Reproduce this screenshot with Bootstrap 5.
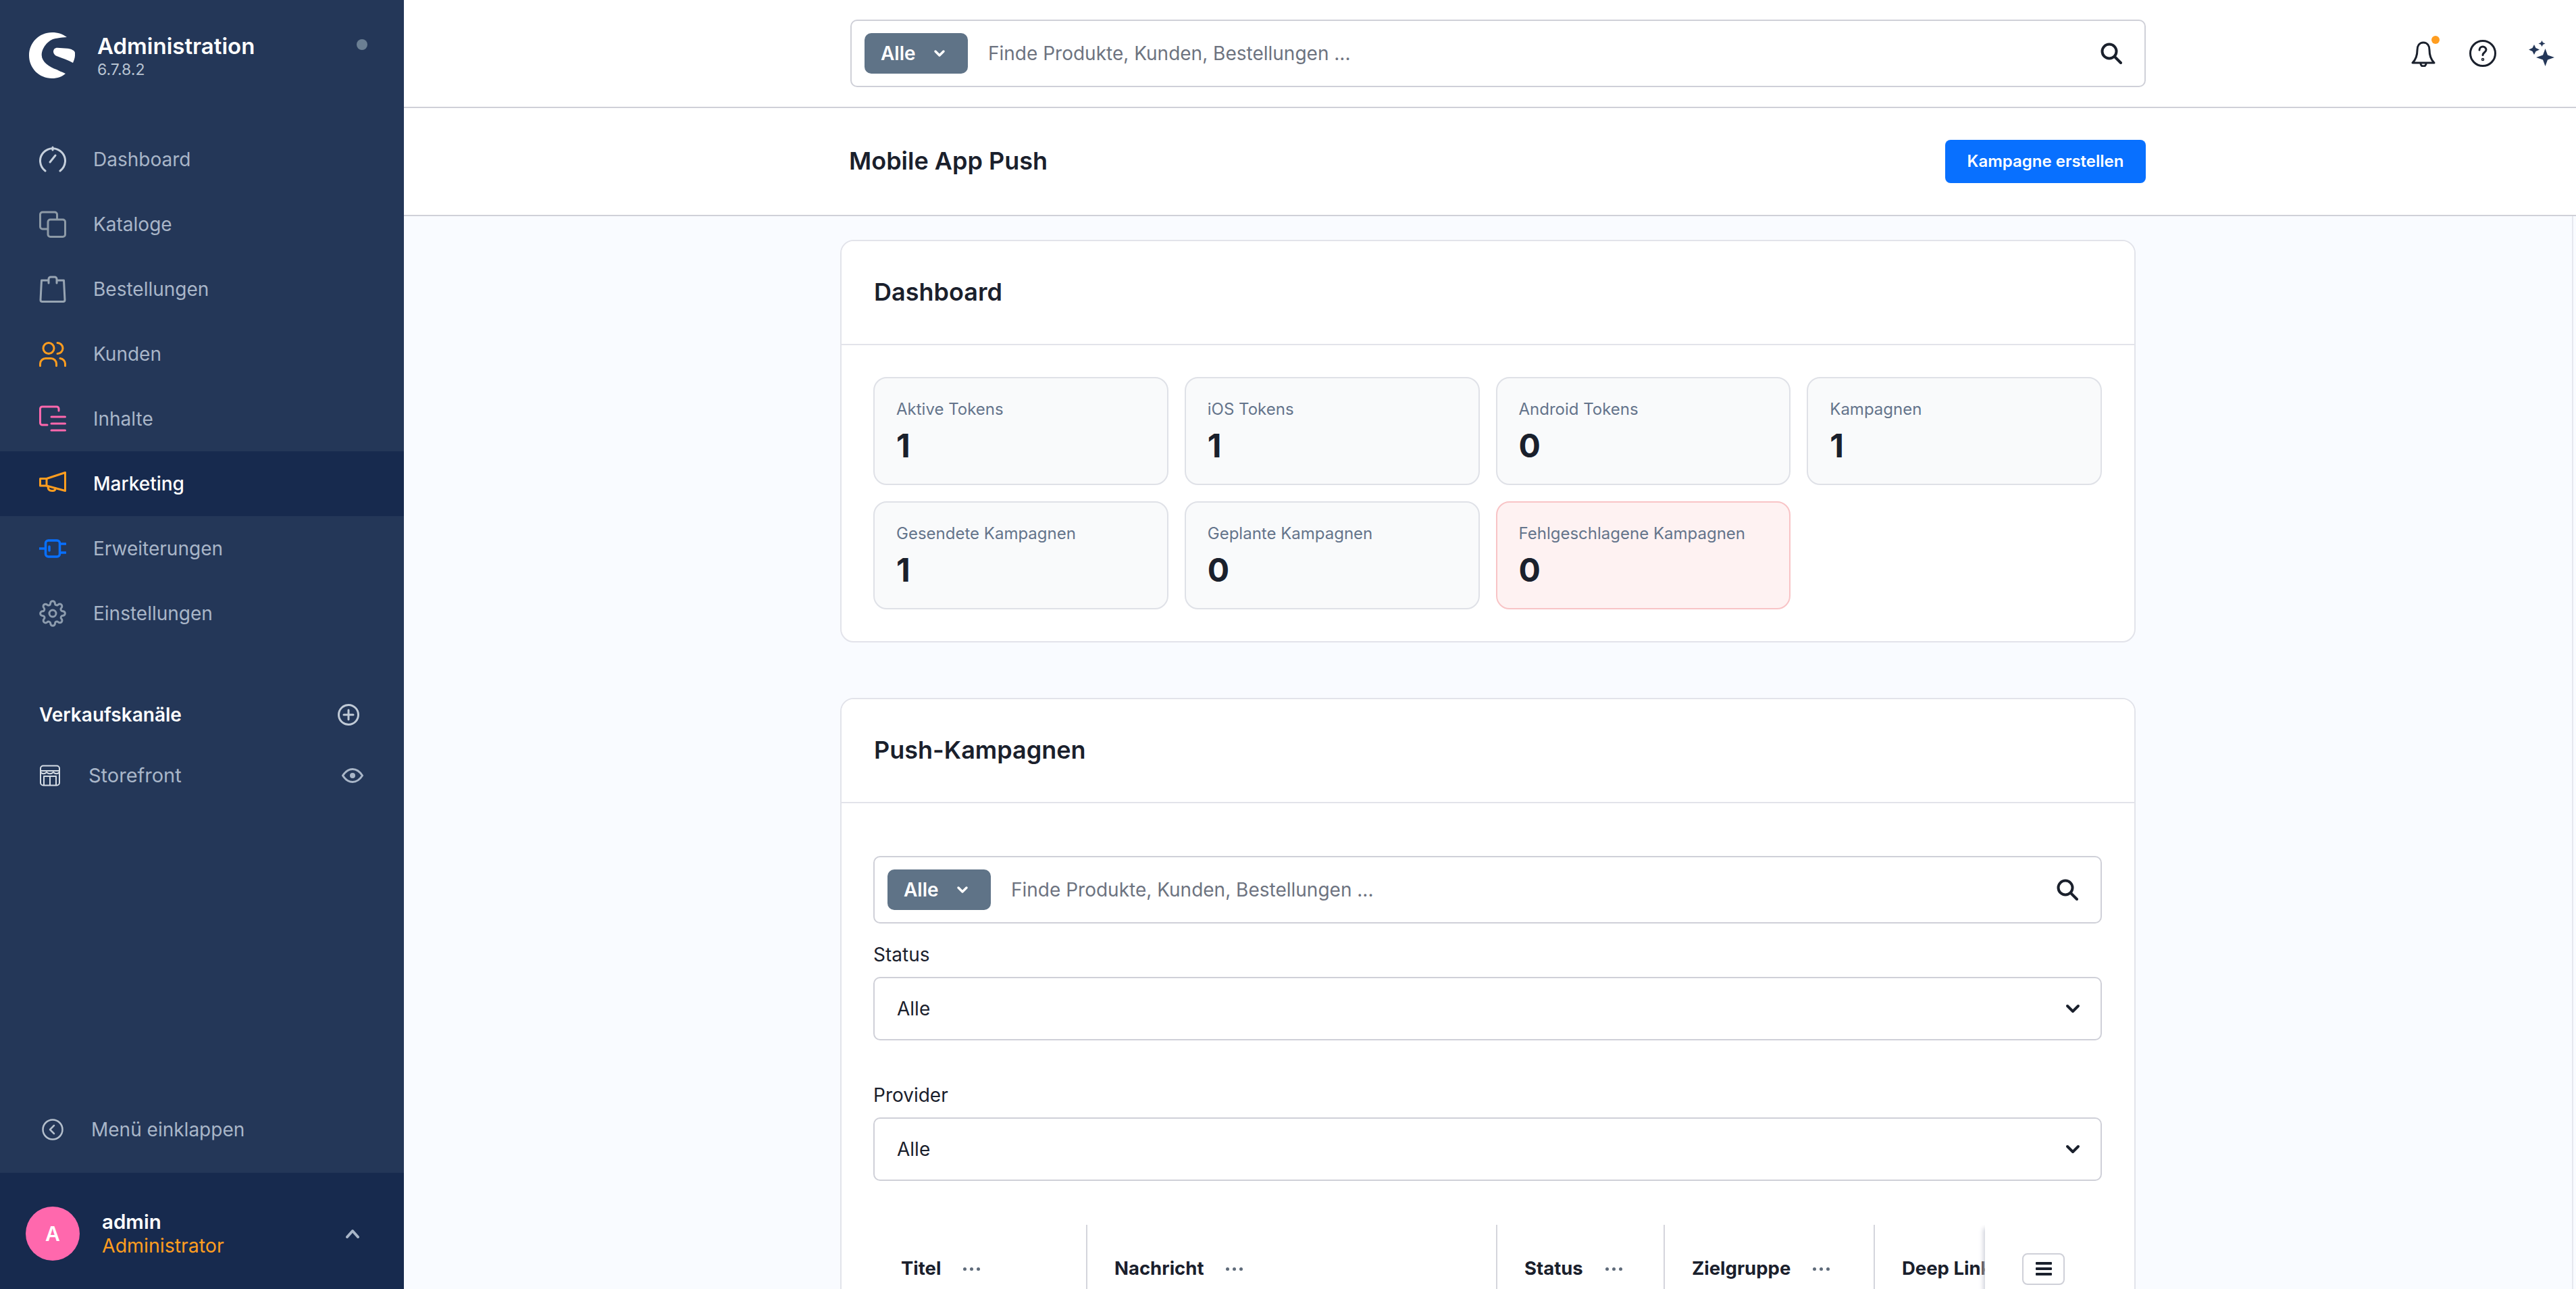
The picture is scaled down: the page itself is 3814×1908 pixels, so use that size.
<!DOCTYPE html>
<html lang="de">
<head>
  <meta charset="UTF-8" />
  <meta name="viewport" content="width=device-width, initial-scale=1.0"/>
  <title>Mobile App Push</title>
  <link href="https://cdn.jsdelivr.net/npm/bootstrap@5.3.2/dist/css/bootstrap.min.css" rel="stylesheet" />
  <style>
    html, body { height: 100%; }
    body {
      font-family: "Inter", "Liberation Sans", sans-serif;
      font-size: 28px;
      color: #1a202c;
      background: #f9fbff;
      overflow: hidden;
    }
    svg { display: block; flex: none; }
    .app-shell { height: 1908px; }

    /* sidebar */
    .side-bar { width: 598px; flex: none; background: #243758; }
    .side-head { height: 188px; padding: 48px 0 0 43px; flex: none; }
    .side-head .brand-text { margin-left: 33px; }
    .brand-name { font-size: 33px; font-weight: 600; color: #fff; line-height: 36px; margin-top: 2px; }
    .brand-ver { font-size: 23px; color: #b9c4d2; line-height: 28px; margin-top: 3px; }
    .brand-dot { width: 16px; height: 16px; border-radius: 50%; background: #6b7f93; margin: 10px 54px 0 auto; }
    .side-nav .nav-link {
      height: 96px; padding: 0 0 0 58px; display: flex; align-items: center;
      color: #a9b6c8; font-size: 28px;
    }
    .side-nav .nav-link span { margin-left: 40px; }
    .side-nav .nav-link.is-current { background: #172a4e; color: #fff; font-weight: 500; }
    .icon-lift { margin-top: -6px; }
    .channel-head { padding: 0 66px 0 58px; margin-top: 82px; height: 40px; flex: none; }
    .channel-title { font-size: 28px; font-weight: 600; color: #fff; }
    .channel-row { padding: 0 60px 0 58px; margin-top: 50px; height: 40px; color: #a9b6c8; font-size: 29px; flex: none; }
    .channel-row span { margin-left: 41px; }
    .collapse-row { padding: 0 0 0 62px; color: #a9b6c8; height: 32px; margin-bottom: 48px; flex: none; }
    .collapse-row span { margin-left: 41px; }
    .user-box { background: #172a4e; height: 172px; padding: 8px 66px 0 38px; flex: none; }
    .user-avatar { width: 80px; height: 80px; border-radius: 50%; background: #ff68ad; color: #fff; font-weight: 600; font-size: 30px; flex: none; }
    .user-text { margin-left: 33px; }
    .user-name { font-size: 29.5px; font-weight: 600; color: #fff; line-height: 36px; }
    .user-role { font-size: 28.5px; color: #ff9d1f; line-height: 36px; }

    /* top bars */
    .top-bar, .page-bar { height: 160px; flex: none; background: #fff; border-bottom: 2px solid #cfd0d8; padding-left: 661px; }
    .top-wrap { width: 1918px; flex: none; }
    .top-icons { margin-left: auto; padding-right: 32px; gap: 48px; }
    .bell-wrap { position: relative; margin-right: 2px; }
    .bell-dot { position: absolute; top: -6px; right: -6px; width: 12px; height: 12px; border-radius: 50%; background: #ff9d1f; }
    .page-title { font-size: 36px; font-weight: 600; margin: 0 0 0 -2px; }
    .btn-create {
      background: #0870ff; border: 0; color: #fff; height: 64px; width: 297px; font-size: 24px; font-weight: 600;
      border-radius: 8px; padding: 0;
    }

    /* search */
    .search-box { height: 100px; border: 2px solid #cfd0d8; border-radius: 10px; background: #fff; padding: 0 33px 0 19px; }
    .search-scope {
      width: 153px; height: 60px; flex: none; background: #5f7387; color: #fff; border: 0; border-radius: 10px;
      font-size: 28px; font-weight: 600; padding: 0 0 0 24px; gap: 26px;
    }
    .search-input { border: 0; padding: 0 0 0 30px; font-size: 28px; background: transparent; box-shadow: none; }
    .search-input::placeholder { color: #6d7380; opacity: 1; }

    /* content */
    .main-area { flex: 1 1 0; min-height: 0; background: #f9fbff; border-right: 2px solid #e6e8ee; margin-right: 4px; overflow: hidden; padding-top: 35px; }
    .panel { width: 1918px; margin: 0 auto 82px; border: 2px solid #e2e3ea; border-radius: 20px; background: #fff; }
    .panel .card-header { height: 154px; padding: 0 48px; background: #fff; border-bottom: 2px solid #e2e3ea; border-radius: 18px 18px 0 0; }
    .panel .card-title { font-size: 36px; font-weight: 600; margin: 0; }
    .panel .card-body { padding: 47px 48px 47px 47px; }
    .panel .push-body { padding-top: 78px; }
    .stat-row { --bs-gutter-x: 24px; --bs-gutter-y: 24px; }
    .stat-box { height: 160px; padding: 31px 32px; background: #f9fafb; border: 2px solid #dfe1e7; border-radius: 20px; }
    .stat-box.is-failed { background: #fef2f2; border-color: #f8c4c6; }
    .stat-label { font-size: 24px; color: #64748b; line-height: 30px; }
    .stat-value { font-size: 48px; font-weight: 700; line-height: 58px; margin-top: 10px; color: #1a202c; }
    .field-status { margin-top: 28px; }
    .field-provider { margin-top: 63px; }
    .field-label { font-size: 28px; line-height: 36px; margin: 0 0 15px; }
    .field-select {
      height: 94px; border: 2px solid #cfd0d8; border-radius: 10px; padding: 0 33px; font-size: 28px; color: #1a202c;
      background-image: url("data:image/svg+xml,%3csvg xmlns='http://www.w3.org/2000/svg' viewBox='0 0 22 16'%3e%3cpath fill='none' stroke='%231a202c' stroke-width='4' stroke-linecap='round' stroke-linejoin='round' d='M3 4l8 8 8-8'/%3e%3c/svg%3e");
      background-position: right 30px center; background-size: 22px 16px;
    }
    .table-head { height: 130px; margin-top: 65px; position: relative; overflow: hidden; }
    .head-cell { height: 130px; border-left: 2px solid #d4d5dc; padding-left: 40px; gap: 33px; font-size: 27.5px; font-weight: 700; white-space: nowrap; flex: none; }
    .head-cell:first-child { border-left: 0; padding-left: 41px; }
    .head-dots { display: flex; gap: 5px; }
    .head-dots i { width: 5px; height: 5px; border-radius: 50%; background: #5f6b7a; display: block; }
    .head-sticky { position: absolute; right: 0; top: 0; bottom: 0; width: 173px; background: #fff; box-shadow: -7px 0 7px -5px #c9cbd6; }
    .list-btn { width: 63px; height: 47px; border: 2px solid #cfd0d8; border-radius: 8px; background: #fff; padding: 0; margin-left: 55px; }
  </style>
</head>
<body>

<div class="app-shell d-flex">
  <aside class="side-bar d-flex flex-column">
    <div class="side-head d-flex align-items-start">
      <svg width="68" height="68" viewBox="0 0 68 68" fill="#fff">
        <path d="M56 7C50 2.500 43 0 34 0 15 0 0 15 0 34s15 34 34 34c8 0 15-2.500 20-7-6-3-10-4-13-6C30 51 19 44 18.700 33.700 18.700 21 31 9 41 8.700 47 7.500 52 7.500 56 7Z"/>
        <path d="M36 28.500c0-3.500 2-5.800 6-5.800l15 1c5 .3 11 3.300 11 6.300.5 6-1 11-3 15-7-4-15-6.500-24-10-3-1-5-4-5-6.500Z"/>
      </svg>
      <div class="brand-text">
        <div class="brand-name">Administration</div>
        <div class="brand-ver">6.7.8.2</div>
      </div>
      <div class="brand-dot"></div>
    </div>

    <nav class="nav flex-column side-nav">
      <a class="nav-link" href="#">
        <svg width="40" height="40" viewBox="0 0 40 40" fill="none" stroke="#c6d0dc" stroke-width="3" stroke-linecap="round"><path d="M9 37A18.500 18.500 0 1 1 31 37"/><path d="M16 24l8-10"/><path d="M20 2v4"/></svg>
        <span>Dashboard</span>
      </a>
      <a class="nav-link" href="#">
        <svg width="40" height="40" viewBox="0 0 40 40" fill="none" stroke="#8d9aa6" stroke-width="3" stroke-linejoin="round"><path d="M12 27H5a3.500 3.500 0 0 1-3.500-3.500v-18A3.500 3.500 0 0 1 5 2h18a3.500 3.500 0 0 1 3.500 3.500V13"/><rect x="13" y="13" width="25.500" height="25.500" rx="3.500"/></svg>
        <span>Kataloge</span>
      </a>
      <a class="nav-link" href="#">
        <svg width="40" height="40" viewBox="0 0 40 40" fill="none" stroke="#98a5b3" stroke-width="3" stroke-linejoin="round" stroke-linecap="round"><path d="M13 7H3.500L2 36a2.500 2.500 0 0 0 2.500 2.500h31A2.500 2.500 0 0 0 38 36L36.500 7H27"/><path d="M14 11V5a3 3 0 0 1 3-3h6a3 3 0 0 1 3 3v6"/></svg>
        <span>Bestellungen</span>
      </a>
      <a class="nav-link" href="#">
        <svg width="40" height="37" viewBox="0 0 40 37" fill="none" stroke="#ff9d1f" stroke-width="3" stroke-linecap="round"><circle cx="14" cy="9.500" r="8"/><path d="M1.500 35.500v-3a8 8 0 0 1 8-8h8a8 8 0 0 1 8 8v3"/><path d="M27 1.500a8 8 0 0 1 0 16"/><path d="M31 24.500c4.500.5 7.500 4 7.500 8v3"/></svg>
        <span>Kunden</span>
      </a>
      <a class="nav-link" href="#">
        <svg width="40" height="40" viewBox="0 0 40 40" fill="none" stroke="#ff68ad" stroke-width="3" stroke-linecap="round"><path d="M29 8V5a3 3 0 0 0-3-3H4.500a3 3 0 0 0-3 3v21a3 3 0 0 0 3 3H12"/><path d="M18 17h20.500M18 27h20.500M18 37h20.500"/></svg>
        <span>Inhalte</span>
      </a>
      <a class="nav-link is-current" href="#">
        <svg class="icon-lift" width="40" height="30" viewBox="0 0 40 30" fill="none" stroke="#ff9d1f" stroke-width="3" stroke-linejoin="round" stroke-linecap="round"><path d="M11 10.500 38.500 1.500v27L11 21H1.500V10.500Z"/><path d="M11 10.500V21"/><path d="M13 22c0 4 2 6.500 6 6.500h1c3 0 4-2 4-4"/></svg>
        <span>Marketing</span>
      </a>
      <a class="nav-link" href="#">
        <svg width="40" height="40" viewBox="0 0 40 40" fill="none" stroke="#0870ff" stroke-width="3.500" stroke-linecap="round"><rect x="9.500" y="8" width="21" height="24" rx="4"/><path d="M0 20h9M31 13h8M31 26h8"/><path d="M15 17v6"/></svg>
        <span>Erweiterungen</span>
      </a>
      <a class="nav-link" href="#">
        <svg width="40" height="40" viewBox="0 0 24 24" fill="none" stroke="#8d9cae" stroke-width="1.800" stroke-linecap="round" stroke-linejoin="round"><circle cx="12" cy="12" r="3"/><path d="M19.400 15a1.650 1.650 0 0 0 .33 1.820l.06.06a2 2 0 0 1 0 2.830 2 2 0 0 1-2.830 0l-.06-.06a1.650 1.650 0 0 0-1.820-.33 1.650 1.650 0 0 0-1 1.510V21a2 2 0 0 1-2 2 2 2 0 0 1-2-2v-.09A1.650 1.650 0 0 0 9 19.400a1.650 1.650 0 0 0-1.820.33l-.06.06a2 2 0 0 1-2.830 0 2 2 0 0 1 0-2.830l.06-.06a1.650 1.650 0 0 0 .33-1.820 1.650 1.650 0 0 0-1.510-1H3a2 2 0 0 1-2-2 2 2 0 0 1 2-2h.09A1.650 1.650 0 0 0 4.600 9a1.650 1.650 0 0 0-.33-1.820l-.06-.06a2 2 0 0 1 0-2.830 2 2 0 0 1 2.830 0l.06.06a1.650 1.650 0 0 0 1.820.33H9a1.650 1.650 0 0 0 1-1.510V3a2 2 0 0 1 2-2 2 2 0 0 1 2 2v.09a1.650 1.650 0 0 0 1 1.510 1.650 1.650 0 0 0 1.820-.33l.06-.06a2 2 0 0 1 2.830 0 2 2 0 0 1 0 2.830l-.06.06a1.650 1.650 0 0 0-.33 1.820V9a1.650 1.650 0 0 0 1.510 1H21a2 2 0 0 1 2 2 2 2 0 0 1-2 2h-.09a1.650 1.650 0 0 0-1.510 1z"/></svg>
        <span>Einstellungen</span>
      </a>
    </nav>

    <div class="channel-head d-flex align-items-center justify-content-between">
      <div class="channel-title">Verkaufskanäle</div>
      <svg width="32" height="32" viewBox="0 0 32 32" fill="none" stroke="#c0cad6" stroke-width="3" stroke-linecap="round"><circle cx="16" cy="16" r="14.500"/><path d="M16 9v14M9 16h14"/></svg>
    </div>
    <div class="channel-row d-flex align-items-center">
      <svg width="32" height="32" viewBox="0 0 32 32" fill="none" stroke="#d5dce5" stroke-width="2" stroke-linejoin="round"><rect x="2" y="1.500" width="28" height="29" rx="4"/><path d="M2 9h28"/><path d="M2 11c3 3 6 3 9 0 3 3 7 3 10 0 3 3 6 3 9 0"/><path d="M7 30V17h18v13M16 17v13"/></svg>
      <span>Storefront</span>
      <svg class="ms-auto" width="32" height="22" viewBox="0 0 32 22" fill="none" stroke="#a9b6c8" stroke-width="3"><path d="M1.500 11C6 4 11 1.500 16 1.500S26 4 30.500 11C26 18 21 20.500 16 20.500S6 18 1.500 11Z"/><circle cx="16" cy="11" r="2.500" fill="#a9b6c8"/></svg>
    </div>

    <div class="collapse-row d-flex align-items-center mt-auto">
      <svg width="32" height="32" viewBox="0 0 32 32" fill="none" stroke="#b4bfcc" stroke-width="2.500" stroke-linecap="round" stroke-linejoin="round"><circle cx="16" cy="16" r="14.500"/><path d="M18 10l-6 6 6 6"/></svg>
      <span>Menü einklappen</span>
    </div>
    <div class="user-box d-flex align-items-center">
      <div class="user-avatar d-flex align-items-center justify-content-center">A</div>
      <div class="user-text">
        <div class="user-name">admin</div>
        <div class="user-role">Administrator</div>
      </div>
      <svg class="ms-auto" width="20" height="14" viewBox="0 0 20 14" fill="none" stroke="#a9b6c8" stroke-width="4" stroke-linecap="round" stroke-linejoin="round"><path d="M2 12l8-9 8 9"/></svg>
    </div>
  </aside>

  <div class="flex-grow-1 d-flex flex-column">
    <header class="top-bar d-flex align-items-center">
      <div class="top-wrap">
        <div class="search-box d-flex align-items-center">
          <button class="search-scope btn d-flex align-items-center" type="button">
            Alle
            <svg width="18" height="12" viewBox="0 0 18 12" fill="none" stroke="#fff" stroke-width="3.500" stroke-linecap="round" stroke-linejoin="round"><path d="M3 3l6 6 6-6"/></svg>
          </button>
          <input class="form-control search-input" type="text" placeholder="Finde Produkte, Kunden, Bestellungen ..." />
          <svg width="32" height="32" viewBox="0 0 32 32" fill="none" stroke="#1a202c" stroke-width="4" stroke-linecap="round"><circle cx="13" cy="13" r="10.500"/><path d="M21 21l9 9"/></svg>
        </div>
      </div>
      <div class="top-icons d-flex align-items-center">
        <div class="bell-wrap">
          <svg width="36" height="40" viewBox="0 -2 36 40" fill="none" stroke="#1a202c" stroke-width="3" stroke-linejoin="round"><path d="M18 2c-6 0-9 5-9 11 0 9-2 14-7 19h32c-5-5-7-10-7-19 0-6-3-11-9-11Z"/><path d="M14 33a4 4 0 0 0 8 0"/></svg>
          <div class="bell-dot"></div>
        </div>
        <svg width="40" height="40" viewBox="0 0 40 40" fill="none" stroke="#1a202c" stroke-width="3" stroke-linecap="round"><circle cx="20" cy="20" r="18.500"/><path d="M15 15c0-3 2.500-5 5-5s5 2 5 4.500c0 4-5 4-5 8"/><circle cx="20" cy="29" r=".8"/></svg>
        <svg width="38" height="38" viewBox="0 0 38 38" fill="#243758"><path d="M24.500 12 28 21.500 38 25l-10 3.500L24.500 38 21 28.500 11 25l10-3.500Z"/><path d="M8 6l2.500 5L16 13.500 10.500 16 8 21l-2.500-5L0 13.500 5.500 11Z"/><path d="M19.500 0 21 3l3.500 1.500L21 6l-1.500 3L18 6l-3.500-1.500L18 3Z"/></svg>
      </div>
    </header>

    <div class="page-bar d-flex align-items-center">
      <div class="top-wrap d-flex align-items-center justify-content-between">
        <h1 class="page-title">Mobile App Push</h1>
        <button class="btn btn-create" type="button">Kampagne erstellen</button>
      </div>
    </div>

    <main class="main-area">
      <section class="card panel">
        <div class="card-header d-flex align-items-center"><h2 class="card-title">Dashboard</h2></div>
        <div class="card-body">
          <div class="row row-cols-4 stat-row">
            <div class="col"><div class="stat-box"><div class="stat-label">Aktive Tokens</div><div class="stat-value">1</div></div></div>
            <div class="col"><div class="stat-box"><div class="stat-label">iOS Tokens</div><div class="stat-value">1</div></div></div>
            <div class="col"><div class="stat-box"><div class="stat-label">Android Tokens</div><div class="stat-value">0</div></div></div>
            <div class="col"><div class="stat-box"><div class="stat-label">Kampagnen</div><div class="stat-value">1</div></div></div>
            <div class="col"><div class="stat-box"><div class="stat-label">Gesendete Kampagnen</div><div class="stat-value">1</div></div></div>
            <div class="col"><div class="stat-box"><div class="stat-label">Geplante Kampagnen</div><div class="stat-value">0</div></div></div>
            <div class="col"><div class="stat-box is-failed"><div class="stat-label">Fehlgeschlagene Kampagnen</div><div class="stat-value">0</div></div></div>
          </div>
        </div>
      </section>

      <section class="card panel">
        <div class="card-header d-flex align-items-center"><h2 class="card-title">Push-Kampagnen</h2></div>
        <div class="card-body push-body">
          <div class="search-box d-flex align-items-center">
            <button class="search-scope btn d-flex align-items-center" type="button">
              Alle
              <svg width="18" height="12" viewBox="0 0 18 12" fill="none" stroke="#fff" stroke-width="3.500" stroke-linecap="round" stroke-linejoin="round"><path d="M3 3l6 6 6-6"/></svg>
            </button>
            <input class="form-control search-input" type="text" placeholder="Finde Produkte, Kunden, Bestellungen ..." />
            <svg width="32" height="32" viewBox="0 0 32 32" fill="none" stroke="#1a202c" stroke-width="4" stroke-linecap="round"><circle cx="13" cy="13" r="10.500"/><path d="M21 21l9 9"/></svg>
          </div>
          <div class="field-status">
            <label class="field-label d-block" for="statusSel">Status</label>
            <select class="form-select field-select" id="statusSel"><option>Alle</option></select>
          </div>
          <div class="field-provider">
            <label class="field-label d-block" for="providerSel">Provider</label>
            <select class="form-select field-select" id="providerSel"><option>Alle</option></select>
          </div>
          <div class="table-head d-flex">
            <div class="head-cell d-flex align-items-center" style="width:315px">Titel <div class="head-dots"><i></i><i></i><i></i></div></div>
            <div class="head-cell d-flex align-items-center" style="width:607px">Nachricht <div class="head-dots"><i></i><i></i><i></i></div></div>
            <div class="head-cell d-flex align-items-center" style="width:248px">Status <div class="head-dots"><i></i><i></i><i></i></div></div>
            <div class="head-cell d-flex align-items-center" style="width:311px">Zielgruppe <div class="head-dots"><i></i><i></i><i></i></div></div>
            <div class="head-cell d-flex align-items-center" style="width:300px">Deep Link</div>
            <div class="head-sticky d-flex align-items-center">
              <button class="list-btn btn d-flex align-items-center justify-content-center" type="button">
                <svg width="24" height="20" viewBox="0 0 24 20" fill="#1a202c"><rect width="24" height="4" rx="1"/><rect y="8" width="24" height="4" rx="1"/><rect y="16" width="24" height="4" rx="1"/></svg>
              </button>
            </div>
          </div>
        </div>
      </section>
    </main>
  </div>
</div>

<script src="https://cdn.jsdelivr.net/npm/bootstrap@5.3.2/dist/js/bootstrap.bundle.min.js"></script>
</body>
</html>
